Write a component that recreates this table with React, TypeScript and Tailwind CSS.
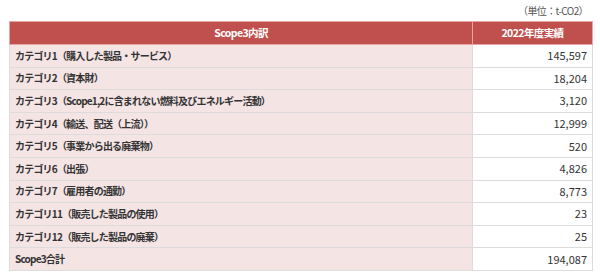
const rows = [
  { label: "カテゴリ1（購入した製品・サービス）", value: "145,597" },
  { label: "カテゴリ2（資本財）", value: "18,204" },
  { label: "カテゴリ3（Scope1,2に含まれない燃料及びエネルギー活動）", value: "3,120" },
  { label: "カテゴリ4（輸送、配送（上流））", value: "12,999" },
  { label: "カテゴリ5（事業から出る廃棄物）", value: "520" },
  { label: "カテゴリ6（出張）", value: "4,826" },
  { label: "カテゴリ7（雇用者の通勤）", value: "8,773" },
  { label: "カテゴリ11（販売した製品の使用）", value: "23" },
  { label: "カテゴリ12（販売した製品の廃棄）", value: "25" },
  { label: "Scope3合計", value: "194,087" },
];

export default function App() {
  return (
    <div
      className="w-[600px] h-[273px] bg-white pl-[9px] pr-[8px] text-[11px] text-[#333]"
      style={{ fontFamily: '"Noto Sans CJK JP", "Noto Sans", sans-serif' }}
    >
      <p className="h-[21px] pt-[4px] pr-[4px] text-right text-[10px] leading-[13px] tracking-[-0.6px] text-[#555]">
        （単位：t-CO2）
      </p>
      <table className="w-[583px] border-collapse table-fixed">
        <colgroup>
          <col className="w-[463px]" />
          <col className="w-[120px]" />
        </colgroup>
        <thead>
          <tr className="h-[23px] bg-[#c0504d] text-white text-[10.5px] tracking-[-0.6px]">
            <th className="border border-[#e8a5a3] text-center font-bold">Scope3内訳</th>
            <th className="border border-[#e8a5a3] text-center font-bold">2022年度実績</th>
          </tr>
        </thead>
        <tbody>
          {rows.map((r) => (
            <tr key={r.label} className="h-[22.6px]">
              <td className="border border-[#dcdcdc] bg-[#f4e4e4] pl-[5px] text-[10px] tracking-[-0.8px] font-bold leading-none">
                {r.label}
              </td>
              <td className="border border-[#dcdcdc] bg-white pr-[5px] text-right leading-none">
                {r.value}
              </td>
            </tr>
          ))}
        </tbody>
      </table>
    </div>
  );
}
